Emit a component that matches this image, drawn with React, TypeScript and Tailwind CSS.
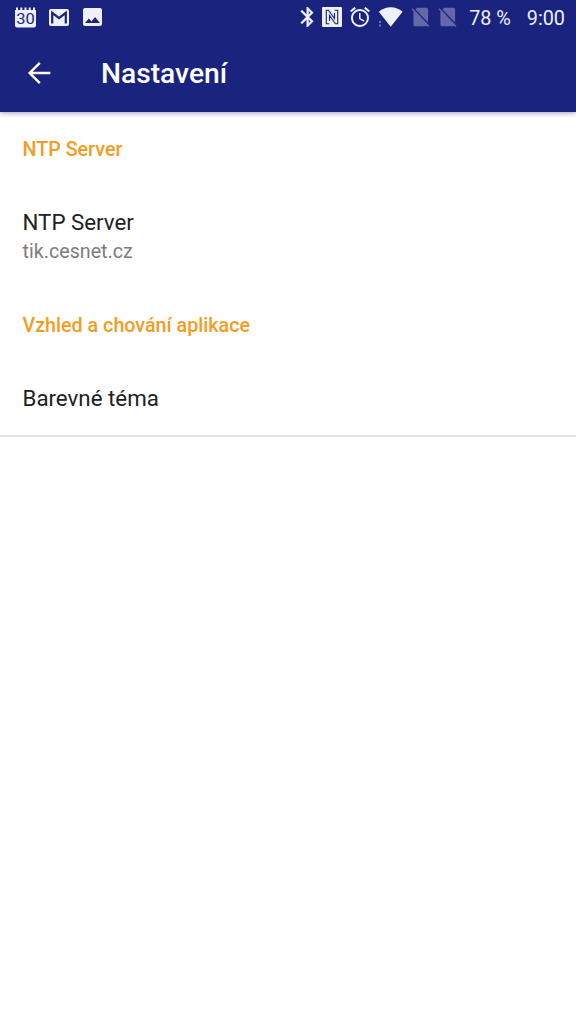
import type { ReactNode } from "react";

function CalendarIcon() {
  return (
    <svg className="w-[21px] h-[21px]" viewBox="0 0 21 21" fill="currentColor">
      <path d="M0 3h21v15.500a2 2 0 0 1-2 2H2a2 2 0 0 1-2-2z" />
      <path d="M1 0.500h2v3H1zM5.300 0.500h2v3h-2zM9.500 0.500h2v3h-2zM13.700 0.500h2v3h-2zM18 0.500h2v3h-2z" />
      <text
        x="1.200"
        y="16.800"
        textLength="18.600"
        lengthAdjust="spacingAndGlyphs"
        className="fill-[#1a237e] font-['Roboto',sans-serif] text-[15.500px]"
      >
        30
      </text>
    </svg>
  );
}

function MailIcon() {
  return (
    <svg className="w-5 h-[17px]" viewBox="0 0 20 17">
      <rect width="20" height="17" rx="2" fill="currentColor" />
      <path d="M3.200 14.500V3.800L10 9.200l6.800-5.400v10.700" fill="none" stroke="#1a237e" strokeWidth="2.200" />
    </svg>
  );
}

function PictureIcon() {
  return (
    <svg className="w-[19px] h-[18px]" viewBox="3 3 18 18" preserveAspectRatio="none" fill="currentColor">
      <path d="M21 19V5c0-1.100-.9-2-2-2H5c-1.100 0-2 .9-2 2v14c0 1.100.9 2 2 2h14c1.100 0 2-.9 2-2zM8.500 13.500l2.500 3.010L14.500 12l4.500 6H5l3.500-4.500z" />
    </svg>
  );
}

function BluetoothIcon() {
  return (
    <svg className="w-[14px] h-5" viewBox="4.700 2 13.300 20" fill="currentColor">
      <path
        stroke="currentColor"
        strokeWidth="0.3"
        d="M17.710 7.710L12 2h-1v7.590L6.410 5 5 6.410 10.590 12 5 17.590 6.410 19 11 14.410V22h1l5.710-5.710-4.300-4.290 4.300-4.290zM13 5.830l1.880 1.880L13 9.590V5.830zm1.880 10.460L13 18.170v-3.760l1.880 1.880z"
      />
    </svg>
  );
}

function NfcIcon() {
  return (
    <svg className="w-5 h-5" viewBox="0 0 20 20">
      <rect width="20" height="20" rx="1" fill="currentColor" />
      <path
        d="M7.300 16.800H4.300V3.200h2.200l6 8.300V6M12.700 3.200h3v13.600h-2.200l-6-8.300V14"
        fill="none"
        stroke="#1a237e"
        strokeWidth="1.100"
      />
    </svg>
  );
}

function AlarmIcon() {
  return (
    <svg className="w-5 h-5" viewBox="2 2 20 20" fill="currentColor">
      <path d="M22 5.720l-4.600-3.860-1.290 1.530 4.600 3.860L22 5.720zM7.880 3.390L6.600 1.860 2 5.710l1.290 1.530 4.590-3.850zM12.500 8H11v6l4.750 2.850.75-1.230-4-2.370V8zM12 4c-4.970 0-9 4.030-9 9s4.020 9 9 9a9 9 0 0 0 0-18zm0 16c-3.870 0-7-3.130-7-7s3.130-7 7-7 7 3.130 7 7-3.130 7-7 7z" />
    </svg>
  );
}

function WifiIcon() {
  return (
    <svg className="w-[25px] h-5" viewBox="0 0 25 20" fill="currentColor">
      <path d="M.8 4.800C4.200 1.800 8.200.3 12.700.3s8.500 1.500 11.900 4.500L12.700 19.700z" />
      <path opacity="0.4" d="M1 14h2v2H1zM1 17.500h2v2H1z" />
    </svg>
  );
}

function NoSimIcon() {
  return (
    <svg className="w-[19px] h-5 text-[#6268aa]" viewBox="0 0 19 20">
      <path d="M6 .8h9.500A1.600 1.600 0 0 1 17.100 2.400v15.200a1.600 1.600 0 0 1-1.600 1.600H4a1.600 1.600 0 0 1-1.600-1.600V4.500z" fill="currentColor" />
      <path d="M2.200 1.200l16.300 17" stroke="#1a237e" strokeWidth="1.600" />
      <path d="M1 1.800l17 17.700" stroke="currentColor" strokeWidth="1.500" />
    </svg>
  );
}

function BackIcon() {
  return (
    <svg className="w-[34px] h-[34px]" viewBox="0 0 24 24" fill="currentColor">
      <path d="M20 11.200H7.400l5.800-5.800L12 4.200 4.200 12l7.800 7.800 1.200-1.200-5.800-5.800H20v-1.600z" />
    </svg>
  );
}

function StatusBar() {
  return (
    <div className="flex h-[34px] items-center pl-[15px] pr-[11px] text-[#eef0fa]">
      <div className="flex items-center">
        <CalendarIcon />
        <div className="ml-[13px] flex items-center gap-[14px]">
          <MailIcon />
          <PictureIcon />
        </div>
      </div>
      <div className="ml-auto flex items-center gap-2">
        <BluetoothIcon />
        <NfcIcon />
        <AlarmIcon />
        <WifiIcon />
        <NoSimIcon />
        <NoSimIcon />
      </div>
      <span className="ml-3 pt-[3px] text-[19.800px] leading-none whitespace-nowrap">78 %</span>
      <span className="ml-4 pt-[3px] text-[19.800px] leading-none">9:00</span>
    </div>
  );
}

function SectionTitle({ children }: { children: ReactNode }) {
  return <h2 className="text-[19.700px] leading-6 font-medium text-[#f39c1f]">{children}</h2>;
}

function Preference({ title, summary }: { title: string; summary?: string }) {
  return (
    <div>
      <p className="text-[22.300px] leading-[27px] text-[#212121]">{title}</p>
      {summary && <p className="pt-0.5 text-[19.700px] leading-7 text-[#7d7d7d]">{summary}</p>}
    </div>
  );
}

export default function App() {
  return (
    <div className="min-h-screen bg-white font-['Roboto',sans-serif]">
      <header className="h-28 bg-[#1a237e] text-white shadow-[0_1px_5px_rgba(26,35,126,0.45)]">
        <StatusBar />
        <div className="flex h-[78px] items-center pl-[22px]">
          <BackIcon />
          <h1 className="ml-[45px] pt-[3px] text-[28.200px] leading-none font-medium">Nastavení</h1>
        </div>
      </header>

      <main>
        <section className="px-[22.500px] pt-[26px]">
          <SectionTitle>NTP Server</SectionTitle>
          <div className="pt-[47px]">
            <Preference title="NTP Server" summary="tik.cesnet.cz" />
          </div>
        </section>
        <section className="border-b-2 border-[#e2e2e2] px-[22.500px] pt-12 pb-[23px]">
          <SectionTitle>Vzhled a chování aplikace</SectionTitle>
          <div className="pt-[47px]">
            <Preference title="Barevné téma" />
          </div>
        </section>
      </main>
    </div>
  );
}
